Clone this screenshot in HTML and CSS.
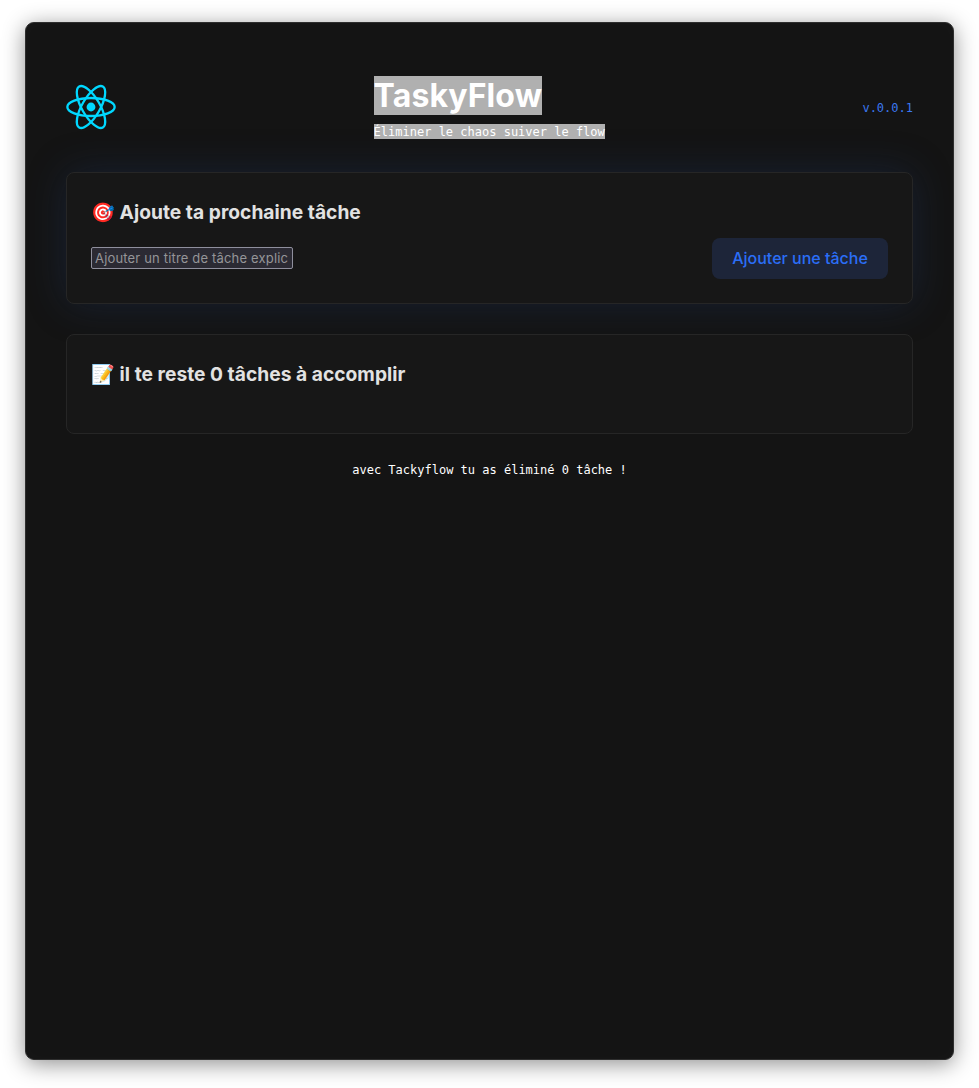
FILE: index.html
```html
<!DOCTYPE html>
<html lang="fr">
<head>
<meta charset="utf-8">
<title>TaskyFlow</title>
<link rel="stylesheet" href="styles.css">
</head>
<body>
<main class="window">
  <header class="header">
    <svg class="logo" viewBox="-11.5 -10.23174 23 20.46348"><circle r="2.05" fill="#00d8ff"/><g stroke="#00d8ff" fill="none"><ellipse rx="11" ry="4.2"/><ellipse rx="11" ry="4.2" transform="rotate(60)"/><ellipse rx="11" ry="4.2" transform="rotate(120)"/></g></svg>
    <div class="brand">
      <h1 class="title"><span class="selected">TaskyFlow</span></h1>
      <p class="tagline"><span class="selected">Éliminer le chaos suiver le flow</span></p>
    </div>
    <span class="version">v.0.0.1</span>
  </header>
  <section class="card card-glow">
    <h2 class="card-title">🎯 Ajoute ta prochaine tâche</h2>
    <div class="form">
      <input class="input" type="text" placeholder="Ajouter un titre de tâche explic">
      <button class="button">Ajouter une tâche</button>
    </div>
  </section>
  <section class="card card-list">
    <h2 class="card-title">📝 il te reste 0 tâches à accomplir</h2>
  </section>
  <footer class="footer">avec Tackyflow tu as éliminé 0 tâche !</footer>
</main>
</body>
</html>
```
FILE: styles.css
```css
* { box-sizing: border-box; }
body { margin: 0; padding: 22px 25px 28px; height: 1088px; background: #fff; font-family: Inter, sans-serif; }
.window { height: 1038px; padding: 53px 40px 40px; border: 1px solid #2e2e2e; border-radius: 9px; background: #141414; box-shadow: 0 4px 22px rgba(0,0,0,.44), inset 0 0 16px rgba(255,255,255,.02); }
.header { display: flex; justify-content: space-between; align-items: center; height: 62px; margin-bottom: 34px; }
.logo { width: 50px; height: 44px; overflow: visible; stroke-width: 1.08; }
.brand { height: 62px; }
.title { margin: 0; font-size: 32px; line-height: 39px; font-weight: 700; letter-spacing: .09px; color: #fff; }
.tagline { margin: 9px 0 0; font: 12px/15px "DejaVu Sans Mono", monospace; color: #fff; }
.tagline .selected { display: inline-block; height: 15px; line-height: 16px; }
.selected { background: #b0b0b0; }
.version { padding-top: 2px; font: 12px/14px "DejaVu Sans Mono", monospace; color: #3b78f0; }
.card { padding: 24px; border: 1px solid #262626; border-radius: 8px; background: #171717; }
.card-glow { height: 132px; box-shadow: 0 0 40px rgba(33,66,125,.28); }
.card-list { height: 100px; margin-top: 30px; }
.card-title { margin: 3px 0 14px; font-size: 19.2px; line-height: 24px; font-weight: 700; letter-spacing: .03px; color: #e2e2e2; }
.form { display: flex; justify-content: space-between; align-items: center; }
.input { width: 202px; height: 22px; margin-bottom: 1px; padding: 1px 3px; border: 1px solid #8f8f9d; border-radius: 2px; background: #2b2a33; font: 13px Inter, sans-serif; letter-spacing: .17px; color: #fff; }
.input::placeholder { color: #959598; }
.button { width: 176px; height: 41px; padding: 0 0 2px; border: 0; border-radius: 8px; background: #1d2539; font: 500 16px Inter, sans-serif; color: #2b6ef6; }
.footer { margin-top: 29px; font: 12px/14px "DejaVu Sans Mono", monospace; color: #fff; text-align: center; }
```
